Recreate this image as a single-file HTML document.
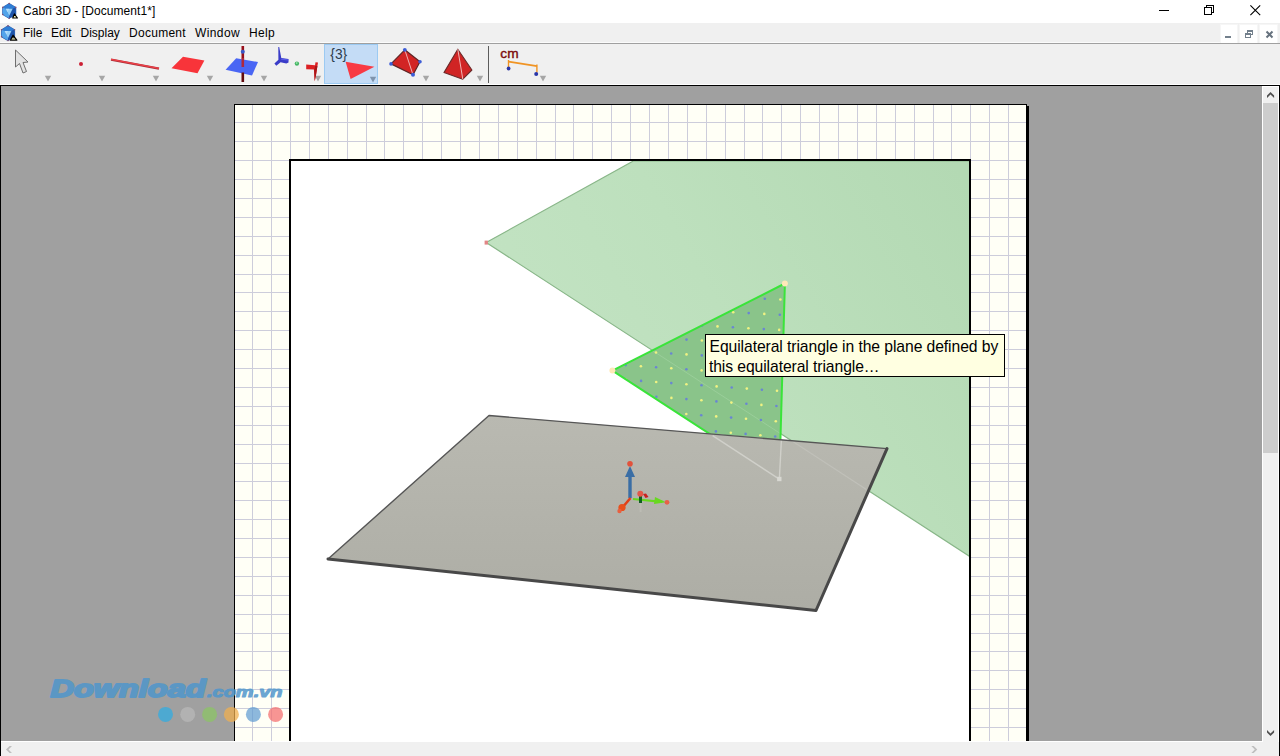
<!DOCTYPE html>
<html><head><meta charset="utf-8"><title>Cabri 3D - [Document1*]</title>
<style>
html,body{margin:0;padding:0;}
body{width:1280px;height:756px;overflow:hidden;position:relative;background:#f0f0f0;font-family:"Liberation Sans",sans-serif;}
.abs{position:absolute;}
#title{left:0;top:0;width:1280px;height:23px;background:#fff;}
#title .t{position:absolute;left:23px;top:4px;font-size:12px;line-height:14px;color:#000;white-space:nowrap;letter-spacing:0.07px;}
#menu{left:0;top:23px;width:1280px;height:20px;background:#f0f0f0;}
#menu span{position:absolute;top:3px;font-size:12px;line-height:14px;color:#000;white-space:nowrap;}
#tool{left:0;top:43px;width:1280px;height:42px;background:#f0f0f0;border-top:1px solid #a0a0a0;box-sizing:border-box;}
#canvas{left:0;top:85px;width:1280px;height:671px;background:#a0a0a0;}
#tip{left:705px;top:334px;width:298px;height:41px;border:1px solid #000;background:#ffffe1;font-size:15.7px;line-height:20px;color:#000;white-space:nowrap;letter-spacing:-0.08px;}
#tip div{position:absolute;left:3.5px;}
</style></head><body>
<div id="title" class="abs"><span class="t">Cabri 3D - [Document1*]</span></div>
<div id="menu" class="abs">
<span style="left:23px">File</span><span style="left:51px">Edit</span><span style="left:80.5px">Display</span><span style="left:129px;letter-spacing:0.28px">Document</span><span style="left:195px;letter-spacing:0.4px">Window</span><span style="left:249px;letter-spacing:0.33px">Help</span>
</div>
<div id="tool" class="abs"></div>
<svg id="main" class="abs" style="left:0;top:0" width="1280" height="756" viewBox="0 0 1280 756">
<!-- canvas -->
<rect x="0" y="85" width="1280" height="671" fill="#a0a0a0"/>
<!-- paper -->
<g shape-rendering="crispEdges">
<rect x="1027" y="106" width="2" height="635" fill="#000"/>
<rect x="234" y="104" width="793" height="637" fill="#000"/>
<rect x="235" y="105" width="791" height="636" fill="#fffff6"/>
<g fill="#cdcddb"><rect x="252" y="105" width="1" height="636"/><rect x="271" y="105" width="1" height="636"/><rect x="290" y="105" width="1" height="636"/><rect x="309" y="105" width="1" height="636"/><rect x="328" y="105" width="1" height="636"/><rect x="347" y="105" width="1" height="636"/><rect x="366" y="105" width="1" height="636"/><rect x="384" y="105" width="1" height="636"/><rect x="403" y="105" width="1" height="636"/><rect x="422" y="105" width="1" height="636"/><rect x="441" y="105" width="1" height="636"/><rect x="460" y="105" width="1" height="636"/><rect x="479" y="105" width="1" height="636"/><rect x="498" y="105" width="1" height="636"/><rect x="517" y="105" width="1" height="636"/><rect x="536" y="105" width="1" height="636"/><rect x="555" y="105" width="1" height="636"/><rect x="573" y="105" width="1" height="636"/><rect x="592" y="105" width="1" height="636"/><rect x="611" y="105" width="1" height="636"/><rect x="630" y="105" width="1" height="636"/><rect x="649" y="105" width="1" height="636"/><rect x="668" y="105" width="1" height="636"/><rect x="687" y="105" width="1" height="636"/><rect x="706" y="105" width="1" height="636"/><rect x="725" y="105" width="1" height="636"/><rect x="744" y="105" width="1" height="636"/><rect x="762" y="105" width="1" height="636"/><rect x="781" y="105" width="1" height="636"/><rect x="800" y="105" width="1" height="636"/><rect x="819" y="105" width="1" height="636"/><rect x="838" y="105" width="1" height="636"/><rect x="857" y="105" width="1" height="636"/><rect x="876" y="105" width="1" height="636"/><rect x="895" y="105" width="1" height="636"/><rect x="914" y="105" width="1" height="636"/><rect x="933" y="105" width="1" height="636"/><rect x="951" y="105" width="1" height="636"/><rect x="970" y="105" width="1" height="636"/><rect x="989" y="105" width="1" height="636"/><rect x="1008" y="105" width="1" height="636"/><rect x="235" y="122" width="791" height="1"/><rect x="235" y="141" width="791" height="1"/><rect x="235" y="160" width="791" height="1"/><rect x="235" y="179" width="791" height="1"/><rect x="235" y="198" width="791" height="1"/><rect x="235" y="217" width="791" height="1"/><rect x="235" y="236" width="791" height="1"/><rect x="235" y="255" width="791" height="1"/><rect x="235" y="274" width="791" height="1"/><rect x="235" y="292" width="791" height="1"/><rect x="235" y="311" width="791" height="1"/><rect x="235" y="330" width="791" height="1"/><rect x="235" y="349" width="791" height="1"/><rect x="235" y="368" width="791" height="1"/><rect x="235" y="387" width="791" height="1"/><rect x="235" y="406" width="791" height="1"/><rect x="235" y="425" width="791" height="1"/><rect x="235" y="444" width="791" height="1"/><rect x="235" y="463" width="791" height="1"/><rect x="235" y="481" width="791" height="1"/><rect x="235" y="500" width="791" height="1"/><rect x="235" y="519" width="791" height="1"/><rect x="235" y="538" width="791" height="1"/><rect x="235" y="557" width="791" height="1"/><rect x="235" y="576" width="791" height="1"/><rect x="235" y="595" width="791" height="1"/><rect x="235" y="614" width="791" height="1"/><rect x="235" y="633" width="791" height="1"/><rect x="235" y="651" width="791" height="1"/><rect x="235" y="670" width="791" height="1"/><rect x="235" y="689" width="791" height="1"/><rect x="235" y="708" width="791" height="1"/><rect x="235" y="727" width="791" height="1"/></g>
<rect x="289" y="159" width="682" height="582" fill="#000"/>
<rect x="291" y="161" width="678" height="580" fill="#fff"/>
</g>
<!-- SCENE -->
<g id="scene">
<defs>
<clipPath id="cv"><rect x="291" y="161" width="678" height="580"/></clipPath>
<clipPath id="ct"><polygon points="612.4,370.6 784.9,283.5 779.3,479.2"/></clipPath>
<clipPath id="cabove"><polygon points="291,161 969,161 969,455.4 887,448.6 489,415.5 291,399"/></clipPath>
<linearGradient id="pg" gradientUnits="userSpaceOnUse" x1="520" y1="420" x2="960" y2="170"><stop offset="0" stop-color="#c3e3c3"/><stop offset="0.45" stop-color="#bde0bd"/><stop offset="1" stop-color="#b3d9b3"/></linearGradient>
<linearGradient id="gg" x1="0" y1="0" x2="0" y2="1"><stop offset="0" stop-color="#b9b9b1"/><stop offset="1" stop-color="#adada5"/></linearGradient>
</defs>
<g clip-path="url(#cv)">
<polygon points="486.2,242.5 633.3,161 1000,161 1000,576.1" fill="url(#pg)" stroke="#88b688" stroke-width="1.2"/>
<g clip-path="url(#cabove)">
<polygon points="612.4,370.6 784.9,283.5 779.3,479.2" fill="#8ac48a"/>
<line x1="652.1" y1="350.3" x2="782" y2="434.6" stroke="#9ace9a" stroke-width="1"/>
<g clip-path="url(#ct)"><g fill="#f0f282"><circle cx="608.9" cy="305.7" r="1.3"/><circle cx="609.7" cy="334.9" r="1.3"/><circle cx="610.5" cy="364.1" r="1.3"/><circle cx="611.4" cy="393.3" r="1.3"/><circle cx="612.2" cy="422.5" r="1.3"/><circle cx="613.0" cy="451.6" r="1.3"/><circle cx="613.8" cy="480.8" r="1.3"/><circle cx="624.2" cy="291.9" r="1.3"/><circle cx="624.8" cy="321.2" r="1.3"/><circle cx="625.4" cy="350.5" r="1.3"/><circle cx="626.0" cy="379.8" r="1.3"/><circle cx="626.7" cy="409.1" r="1.3"/><circle cx="627.3" cy="438.4" r="1.3"/><circle cx="627.9" cy="467.7" r="1.3"/><circle cx="640.0" cy="307.4" r="1.3"/><circle cx="640.5" cy="336.8" r="1.3"/><circle cx="640.9" cy="366.2" r="1.3"/><circle cx="641.4" cy="395.6" r="1.3"/><circle cx="641.8" cy="425.0" r="1.3"/><circle cx="642.3" cy="454.4" r="1.3"/><circle cx="642.7" cy="483.8" r="1.3"/><circle cx="655.4" cy="293.4" r="1.3"/><circle cx="655.7" cy="322.9" r="1.3"/><circle cx="656.0" cy="352.5" r="1.3"/><circle cx="656.2" cy="382.0" r="1.3"/><circle cx="656.5" cy="411.5" r="1.3"/><circle cx="656.8" cy="441.1" r="1.3"/><circle cx="657.0" cy="470.6" r="1.3"/><circle cx="671.0" cy="279.4" r="1.3"/><circle cx="671.1" cy="309.0" r="1.3"/><circle cx="671.2" cy="338.6" r="1.3"/><circle cx="671.3" cy="368.3" r="1.3"/><circle cx="671.4" cy="397.9" r="1.3"/><circle cx="671.5" cy="427.6" r="1.3"/><circle cx="671.6" cy="457.2" r="1.3"/><circle cx="686.7" cy="294.9" r="1.3"/><circle cx="686.6" cy="324.7" r="1.3"/><circle cx="686.5" cy="354.4" r="1.3"/><circle cx="686.4" cy="384.2" r="1.3"/><circle cx="686.3" cy="414.0" r="1.3"/><circle cx="686.2" cy="443.7" r="1.3"/><circle cx="686.2" cy="473.5" r="1.3"/><circle cx="702.4" cy="280.8" r="1.3"/><circle cx="702.1" cy="310.6" r="1.3"/><circle cx="701.9" cy="340.5" r="1.3"/><circle cx="701.6" cy="370.4" r="1.3"/><circle cx="701.4" cy="400.2" r="1.3"/><circle cx="701.1" cy="430.1" r="1.3"/><circle cx="700.9" cy="460.0" r="1.3"/><circle cx="717.9" cy="296.4" r="1.3"/><circle cx="717.5" cy="326.4" r="1.3"/><circle cx="717.0" cy="356.4" r="1.3"/><circle cx="716.6" cy="386.4" r="1.3"/><circle cx="716.2" cy="416.4" r="1.3"/><circle cx="715.7" cy="446.4" r="1.3"/><circle cx="715.3" cy="476.4" r="1.3"/><circle cx="733.8" cy="282.2" r="1.3"/><circle cx="733.2" cy="312.3" r="1.3"/><circle cx="732.6" cy="342.4" r="1.3"/><circle cx="732.0" cy="372.5" r="1.3"/><circle cx="731.4" cy="402.6" r="1.3"/><circle cx="730.8" cy="432.7" r="1.3"/><circle cx="730.2" cy="462.8" r="1.3"/><circle cx="749.1" cy="298.0" r="1.3"/><circle cx="748.4" cy="328.2" r="1.3"/><circle cx="747.6" cy="358.4" r="1.3"/><circle cx="746.8" cy="388.6" r="1.3"/><circle cx="746.0" cy="418.8" r="1.3"/><circle cx="745.2" cy="449.0" r="1.3"/><circle cx="744.4" cy="479.3" r="1.3"/><circle cx="765.3" cy="283.6" r="1.3"/><circle cx="764.3" cy="313.9" r="1.3"/><circle cx="763.3" cy="344.2" r="1.3"/><circle cx="762.3" cy="374.6" r="1.3"/><circle cx="761.4" cy="404.9" r="1.3"/><circle cx="760.4" cy="435.2" r="1.3"/><circle cx="759.4" cy="465.5" r="1.3"/><circle cx="780.4" cy="299.5" r="1.3"/><circle cx="779.2" cy="329.9" r="1.3"/><circle cx="778.1" cy="360.4" r="1.3"/><circle cx="777.0" cy="390.8" r="1.3"/><circle cx="775.8" cy="421.3" r="1.3"/><circle cx="774.7" cy="451.7" r="1.3"/><circle cx="773.5" cy="482.2" r="1.3"/><circle cx="791.4" cy="407.2" r="1.3"/><circle cx="790.1" cy="437.8" r="1.3"/><circle cx="788.7" cy="468.3" r="1.3"/></g><g fill="#6a86d2"><circle cx="608.5" cy="291.1" r="1.3"/><circle cx="609.3" cy="320.3" r="1.3"/><circle cx="610.1" cy="349.5" r="1.3"/><circle cx="611.0" cy="378.7" r="1.3"/><circle cx="611.8" cy="407.9" r="1.3"/><circle cx="612.6" cy="437.1" r="1.3"/><circle cx="613.4" cy="466.2" r="1.3"/><circle cx="624.5" cy="306.6" r="1.3"/><circle cx="625.1" cy="335.8" r="1.3"/><circle cx="625.7" cy="365.1" r="1.3"/><circle cx="626.4" cy="394.4" r="1.3"/><circle cx="627.0" cy="423.7" r="1.3"/><circle cx="627.6" cy="453.0" r="1.3"/><circle cx="628.2" cy="482.3" r="1.3"/><circle cx="639.8" cy="292.7" r="1.3"/><circle cx="640.2" cy="322.1" r="1.3"/><circle cx="640.7" cy="351.5" r="1.3"/><circle cx="641.1" cy="380.9" r="1.3"/><circle cx="641.6" cy="410.3" r="1.3"/><circle cx="642.0" cy="439.7" r="1.3"/><circle cx="642.5" cy="469.1" r="1.3"/><circle cx="655.3" cy="278.7" r="1.3"/><circle cx="655.5" cy="308.2" r="1.3"/><circle cx="655.8" cy="337.7" r="1.3"/><circle cx="656.1" cy="367.2" r="1.3"/><circle cx="656.4" cy="396.8" r="1.3"/><circle cx="656.6" cy="426.3" r="1.3"/><circle cx="656.9" cy="455.8" r="1.3"/><circle cx="671.0" cy="294.2" r="1.3"/><circle cx="671.1" cy="323.8" r="1.3"/><circle cx="671.2" cy="353.5" r="1.3"/><circle cx="671.3" cy="383.1" r="1.3"/><circle cx="671.4" cy="412.7" r="1.3"/><circle cx="671.5" cy="442.4" r="1.3"/><circle cx="671.6" cy="472.0" r="1.3"/><circle cx="686.7" cy="280.1" r="1.3"/><circle cx="686.6" cy="309.8" r="1.3"/><circle cx="686.5" cy="339.6" r="1.3"/><circle cx="686.4" cy="369.3" r="1.3"/><circle cx="686.4" cy="399.1" r="1.3"/><circle cx="686.3" cy="428.8" r="1.3"/><circle cx="686.2" cy="458.6" r="1.3"/><circle cx="702.3" cy="295.7" r="1.3"/><circle cx="702.0" cy="325.6" r="1.3"/><circle cx="701.8" cy="355.4" r="1.3"/><circle cx="701.5" cy="385.3" r="1.3"/><circle cx="701.2" cy="415.2" r="1.3"/><circle cx="701.0" cy="445.0" r="1.3"/><circle cx="700.7" cy="474.9" r="1.3"/><circle cx="718.1" cy="281.5" r="1.3"/><circle cx="717.7" cy="311.4" r="1.3"/><circle cx="717.2" cy="341.4" r="1.3"/><circle cx="716.8" cy="371.4" r="1.3"/><circle cx="716.4" cy="401.4" r="1.3"/><circle cx="715.9" cy="431.4" r="1.3"/><circle cx="715.5" cy="461.4" r="1.3"/><circle cx="733.5" cy="297.2" r="1.3"/><circle cx="732.9" cy="327.3" r="1.3"/><circle cx="732.3" cy="357.4" r="1.3"/><circle cx="731.7" cy="387.5" r="1.3"/><circle cx="731.1" cy="417.6" r="1.3"/><circle cx="730.5" cy="447.7" r="1.3"/><circle cx="729.8" cy="477.8" r="1.3"/><circle cx="749.5" cy="282.9" r="1.3"/><circle cx="748.7" cy="313.1" r="1.3"/><circle cx="748.0" cy="343.3" r="1.3"/><circle cx="747.2" cy="373.5" r="1.3"/><circle cx="746.4" cy="403.7" r="1.3"/><circle cx="745.6" cy="433.9" r="1.3"/><circle cx="744.8" cy="464.2" r="1.3"/><circle cx="764.8" cy="298.7" r="1.3"/><circle cx="763.8" cy="329.1" r="1.3"/><circle cx="762.8" cy="359.4" r="1.3"/><circle cx="761.9" cy="389.7" r="1.3"/><circle cx="760.9" cy="420.0" r="1.3"/><circle cx="759.9" cy="450.4" r="1.3"/><circle cx="759.0" cy="480.7" r="1.3"/><circle cx="781.0" cy="284.3" r="1.3"/><circle cx="779.8" cy="314.7" r="1.3"/><circle cx="778.7" cy="345.1" r="1.3"/><circle cx="777.5" cy="375.6" r="1.3"/><circle cx="776.4" cy="406.0" r="1.3"/><circle cx="775.2" cy="436.5" r="1.3"/><circle cx="774.1" cy="466.9" r="1.3"/><circle cx="790.7" cy="422.5" r="1.3"/><circle cx="789.4" cy="453.0" r="1.3"/><circle cx="788.1" cy="483.6" r="1.3"/></g></g>
<polygon points="612.4,370.6 784.9,283.5 779.3,479.2" fill="none" stroke="#3ae43a" stroke-width="2" stroke-linejoin="round"/>
</g>
<rect x="484.6" y="240.6" width="3.3" height="4" fill="#e28686"/>
<polygon points="489,415.5 887,448.6 816,610.5 328,559" fill="url(#gg)"/>
<g stroke="#d0d0ca" stroke-width="1.4" fill="none">
<line x1="712.6" y1="435.6" x2="779.3" y2="479.2"/>
<line x1="781.4" y1="440" x2="779.4" y2="478"/>
<line x1="791.3" y1="440.6" x2="866.4" y2="489.6" stroke="#c0c0b9" stroke-width="1.2"/>
</g>
<rect x="777.1" y="476.8" width="4.4" height="4.4" fill="#d8d8d2"/>
<polyline points="328,559 489,415.5 887,448.6" fill="none" stroke="#565656" stroke-width="1.4" stroke-linejoin="round"/>
<polyline points="328,559 816,610.5 887,448.6" fill="none" stroke="#484848" stroke-width="3" stroke-linejoin="round" stroke-linecap="round"/>
<circle cx="784.9" cy="283.5" r="3" fill="#ffe9b8"/>
<circle cx="612.4" cy="370.6" r="3" fill="#ffe9b8"/>
<!-- axes -->
<g id="axes">
<line x1="630" y1="498" x2="630" y2="474" stroke="#3a6ea5" stroke-width="3.4"/>
<polygon points="630,466 635,477 625,477" fill="#3a6ea5"/>
<circle cx="630" cy="463.8" r="2.8" fill="#e2523c"/>
<line x1="630.5" y1="498" x2="622" y2="508" stroke="#e04018" stroke-width="2.6"/>
<circle cx="622" cy="507.5" r="3.6" fill="#e8501c"/>
<circle cx="619.5" cy="511" r="2.2" fill="#e86040"/>
<line x1="633" y1="499" x2="662" y2="501.8" stroke="#68d820" stroke-width="2.2"/>
<polygon points="655,497 666,502.3 654,504" fill="#68d820"/>
<circle cx="667" cy="502.3" r="2.4" fill="#e86048"/>
<rect x="639" y="496" width="3" height="7" fill="#106020"/>
<rect x="639.6" y="503" width="2" height="9" fill="#bcbcb4"/>
<polygon points="643,494 646,493.5 648.5,497 645.5,498" fill="#c82020"/>
<circle cx="640.3" cy="493.8" r="3" fill="#e2584a"/>
</g>
</g>
</g>
<!-- watermark -->
<g id="wm" font-family="Liberation Sans, sans-serif" font-weight="bold" font-style="italic" fill="#4f96cc" stroke="#4f96cc" stroke-linejoin="round" opacity="0.84">
<text x="50.5" y="696.8" font-size="24.5" textLength="155" lengthAdjust="spacingAndGlyphs" stroke-width="2">Download</text>
<text x="207" y="697" font-size="15.5" textLength="75.5" lengthAdjust="spacingAndGlyphs" stroke-width="1.1">.com.vn</text>
</g>
<g id="wmdots">
<circle cx="165.5" cy="714.4" r="7.5" fill="#44aad6" opacity="0.9"/>
<circle cx="187.7" cy="714.4" r="7.5" fill="#b4b4b4" opacity="0.9"/>
<circle cx="209.6" cy="714.4" r="7.5" fill="#8ec06c" opacity="0.85"/>
<circle cx="231.4" cy="714.4" r="7.5" fill="#f0b050" opacity="0.74"/>
<circle cx="253.4" cy="714.4" r="7.5" fill="#5c9ad2" opacity="0.7"/>
<circle cx="275.6" cy="714.4" r="7.5" fill="#f46c6c" opacity="0.72"/>
</g>
<!-- frame chrome -->
<g shape-rendering="crispEdges">
<rect x="0" y="84" width="1280" height="1" fill="#fff"/><rect x="0" y="85" width="1280" height="1" fill="#000"/>
<rect x="0" y="85" width="1" height="671" fill="#000"/>
<rect x="1279" y="85" width="1" height="671" fill="#000"/>
<rect x="1262" y="86" width="17" height="670" fill="#f0f0f0"/>
<rect x="1262" y="86" width="1" height="656" fill="#fff"/>
<rect x="1" y="741" width="1278" height="15" fill="#f0f0f0"/>
<rect x="1" y="741" width="1262" height="1" fill="#fff"/>
<rect x="1263" y="103" width="16" height="350" fill="#cdcdcd"/>
</g>
<!-- app icons -->
<defs>
<radialGradient id="ig" cx="0.45" cy="0.5" r="0.6"><stop offset="0" stop-color="#a4d8fa"/><stop offset="0.55" stop-color="#4ea4ea"/><stop offset="1" stop-color="#1c58ae"/></radialGradient>
<g id="appico">
<polygon points="9.2,3.4 15.8,7.4 15.8,14.6 9.2,18.4 2.7,14.6 2.7,7.4" fill="#2a6cc4" stroke="#1e58ac" stroke-width="0.8"/>
<polygon points="9.2,3.6 15.6,7.5 12.6,8.8 5.8,8.8 2.9,7.5" fill="#2f7ed6"/>
<polygon points="2.9,7.5 5.8,8.8 9.2,15.8 9.2,18.2 2.9,14.5" fill="#52a4ea"/>
<polygon points="15.6,7.5 12.6,8.8 9.2,15.8 9.2,18.2 15.6,14.5" fill="#1d54aa"/>
<polygon points="5.8,8.8 12.6,8.8 9.2,15.8" fill="#96d0f8"/>
<polygon points="5.8,8.8 9.2,8.8 7.5,12.3" fill="#c0e4fc" opacity="0.7"/>
<g fill="#8a5272"><circle cx="9.2" cy="3.6" r="0.8"/><circle cx="15.7" cy="7.4" r="0.8"/><circle cx="2.8" cy="7.4" r="0.8"/><circle cx="2.8" cy="14.5" r="0.8"/><circle cx="9.2" cy="18.2" r="0.8"/></g>
</g>
</defs>
<use href="#appico"/>
<polygon points="12.7,18 17.4,18 14.4,13.9" fill="#ffffc0" stroke="#000" stroke-width="1.2" stroke-linejoin="round"/>
<use href="#appico" transform="translate(-1.2,22.3)"/>
<polygon points="10.4,40.2 16.8,40.2 13,35.2" fill="#ffffc8" stroke="#000" stroke-width="1.2" stroke-linejoin="round"/>
<path d="M11.5,37.8 L15,37.8" stroke="#000" stroke-width="1"/>
<!-- toolbar icons -->
<g id="tb">
<rect x="324.5" y="44.5" width="53" height="39" fill="#c4dcf6" stroke="#9ccaf2" stroke-width="1" shape-rendering="crispEdges"/>
<g fill="#a6a6a6"><polygon points="44.8,75.8 51.2,75.8 48,81.4"/><polygon points="98.8,75.8 105.2,75.8 102,81.4"/><polygon points="152.8,75.8 159.2,75.8 156,81.4"/><polygon points="206.8,75.8 213.2,75.8 210,81.4"/><polygon points="260.8,75.8 267.2,75.8 264,81.4"/><polygon points="314.8,75.8 321.2,75.8 318,81.4"/><polygon points="422.8,75.8 429.2,75.8 426,81.4"/><polygon points="476.8,75.8 483.2,75.8 480,81.4"/><polygon points="539.8,75.8 546.2,75.8 543,81.4"/><polygon points="369.8,76.8 376.2,76.8 373,82.4" fill="#7f94ad"/></g>
<polygon points="15.5,50 15.5,67 19.5,63.5 23,73 26.5,71.5 23,62.5 28,62" fill="#e2e2e2" stroke="#6e6e6e" stroke-width="1" stroke-linejoin="miter"/>
<circle cx="81" cy="64" r="2" fill="#cc2034"/>
<line x1="111" y1="59.6" x2="159" y2="68.6" stroke="#a83038" stroke-width="2.4"/>
<line x1="111" y1="59.3" x2="159" y2="68.3" stroke="#f04048" stroke-width="1.3"/>
<polygon points="183,56.8 204.4,60.5 197.5,73.2 171.5,68.2" fill="#f8343a"/>
<polygon points="236.2,58.2 258,62 252,75.5 225.6,69.8" fill="#4a66f4"/>
<rect x="241.5" y="46" width="2.6" height="12.5" fill="#98101a"/>
<rect x="241.5" y="58" width="2.6" height="9" fill="#b0283c"/>
<rect x="241.5" y="72.5" width="2.6" height="9.5" fill="#620a0e"/>
<circle cx="242.8" cy="51.8" r="2" fill="#3858c8"/>
<g><polygon points="278.3,46.9 279.2,46.9 281.3,58 288.5,59.1 288.5,62.4 286.3,63.5 280.6,62.3 276.3,65.8 274.4,63.5 278.4,59.7" fill="#3a3cc8"/><polygon points="281.3,58.4 288.3,59.4 288.3,60.6 281,59.8" fill="#5a5ce8"/></g>
<circle cx="296.9" cy="63.6" r="2.2" fill="#44b464"/><circle cx="296.7" cy="63" r="1" fill="#8ee0a0"/>
<g><polygon points="306.2,64.4 315,65.3 315.5,62.2 318,62.4 316.2,74 314.7,81.3 313.9,69.6 306.2,69.2" fill="#dc2024"/><polygon points="315.2,66 317.4,66 316,75 314.7,81.3 314.2,70" fill="#a81618"/></g>
<polygon points="345.6,61.8 374.4,66.8 350.6,78.9" fill="#f83a44"/>
<!-- tetra -->
<polygon points="404.8,49.8 420,61.8 413,74.8 391,63.9" fill="#d22424" stroke="#5e2626" stroke-width="1.2" stroke-linejoin="round"/>
<line x1="404.8" y1="49.8" x2="413" y2="74.8" stroke="#f0b0b0" stroke-width="1"/>
<g fill="#3c5cd6"><circle cx="404.8" cy="49.8" r="1.9"/><circle cx="420" cy="61.8" r="1.8"/><circle cx="413" cy="74.8" r="2"/><circle cx="391" cy="63.9" r="1.8"/></g>
<!-- pyramid -->
<polygon points="457.8,49.2 471.9,70 462.8,79.2 444,72.6" fill="#d02424" stroke="#6a2a2a" stroke-width="1.1" stroke-linejoin="round"/>
<line x1="457.8" y1="49.2" x2="462.8" y2="79.2" stroke="#f0b4b4" stroke-width="1"/>
<rect x="488" y="46" width="1" height="37" fill="#5c5c5c" shape-rendering="crispEdges"/>
<g stroke="#f09424" stroke-width="1.4" fill="none"><line x1="508.5" y1="60" x2="508.5" y2="67"/><line x1="536.9" y1="64.5" x2="536.9" y2="72.5"/><line x1="508.5" y1="61.6" x2="537" y2="66.2" stroke-width="1.8"/></g>
<circle cx="508.6" cy="68.5" r="1.9" fill="#2a36a8"/><circle cx="536.2" cy="74" r="2" fill="#2a36a8"/>
<text x="330.3" y="59.1" font-family="Liberation Sans, sans-serif" font-size="13.8" fill="#2e3c4c">{3}</text>
<text x="500.3" y="58" font-family="Liberation Sans, sans-serif" font-size="13.7" fill="#7c0c0c" stroke="#7c0c0c" stroke-width="0.4">cm</text>
</g>
<!-- window controls -->
<g id="wc" shape-rendering="crispEdges">
<rect x="1159" y="10" width="10" height="1" fill="#000"/>
<rect x="1206.5" y="5.5" width="7" height="7" fill="none" stroke="#000"/>
<rect x="1204.5" y="7.5" width="7" height="7" fill="#fff" stroke="#000"/>
</g>
<path d="M1250.4,5.4 L1260.2,15.2 M1260.2,5.4 L1250.4,15.2" stroke="#000" stroke-width="1.1" fill="none"/>
<g shape-rendering="crispEdges">
<rect x="1220" y="24" width="18" height="19" fill="#f6f6f6"/><rect x="1221" y="25" width="16" height="18" fill="#fff"/>
<rect x="1239" y="24" width="19" height="19" fill="#f6f6f6"/><rect x="1240" y="25" width="17" height="18" fill="#fff"/>
<rect x="1259" y="24" width="19" height="19" fill="#f6f6f6"/><rect x="1260" y="25" width="17" height="18" fill="#fff"/><rect x="0" y="42" width="1220" height="1" fill="#fbfbfb"/><rect x="0" y="43" width="1280" height="1" fill="#a0a0a0"/>
<rect x="1225" y="36" width="6" height="2" fill="#73808c"/>
<rect x="1247.5" y="30.5" width="5" height="4" fill="none" stroke="#73808c"/>
<rect x="1247" y="30" width="6" height="2" fill="#73808c"/>
<rect x="1245.5" y="33.5" width="5" height="4" fill="#fff" stroke="#73808c"/>
<rect x="1245" y="33" width="6" height="2" fill="#73808c"/>
</g>
<path d="M1266.5,31.5 L1272.5,37.5 M1272.5,31.5 L1266.5,37.5" stroke="#66727e" stroke-width="2" fill="none"/>
<!-- scroll arrows -->
<g shape-rendering="crispEdges"><rect x="1262" y="86" width="17" height="1" fill="#fff"/><rect x="1278" y="86" width="1" height="656" fill="#fff"/></g>
<polygon points="1270.5,91.9 1274.1,95.5 1274.1,97.9 1270.5,94.4 1267,97.9 1267,95.5" fill="#505050"/>
<polygon points="1270.5,736 1274.1,732.4 1274.1,730 1270.5,733.5 1267,730 1267,732.4" fill="#505050"/>
<polygon points="6,749.5 9.6,746 12,746 8.5,749.5 12,753 9.6,753" fill="#bfbfbf"/>
<polygon points="1257.3,749.5 1253.7,746 1251.3,746 1254.8,749.5 1251.3,753 1253.7,753" fill="#bfbfbf"/>
</svg>
<div id="tip" class="abs"><div style="top:2px">Equilateral triangle in the plane defined by</div><div style="top:21.8px;left:2.9px">this equilateral triangle…</div></div>
</body></html>
